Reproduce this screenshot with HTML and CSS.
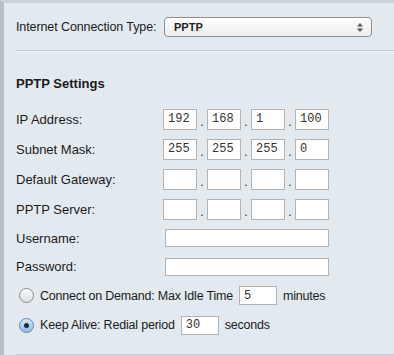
FILE: index.html
```html
<!DOCTYPE html>
<html lang="en">
<head>
    <meta charset="UTF-8">
    <title>PPTP Settings</title>
    <link rel="stylesheet" href="styles.css">
</head>
<body>
    <div class="frame">
        <div class="row top">
            <span class="label">Internet Connection Type:</span>
            <div class="select">
                <span>PPTP</span>
                <svg width="6" height="9" viewBox="0 0 6 9"><path d="M3 0 L6 3.5 H0 Z M3 9 L6 5.5 H0 Z" fill="#555"/></svg>
            </div>
        </div>
        <hr class="line">

        <h2>PPTP Settings</h2>

        <div class="row ip first">
            <span class="label">IP Address:</span>
            <div class="octets">
                <input class="oct" value="192"><span class="dot">.</span><input class="oct" value="168"><span class="dot">.</span><input class="oct" value="1"><span class="dot">.</span><input class="oct" value="100">
            </div>
        </div>
        <div class="row ip">
            <span class="label">Subnet Mask:</span>
            <div class="octets">
                <input class="oct" value="255"><span class="dot">.</span><input class="oct" value="255"><span class="dot">.</span><input class="oct" value="255"><span class="dot">.</span><input class="oct" value="0">
            </div>
        </div>
        <div class="row ip">
            <span class="label">Default Gateway:</span>
            <div class="octets">
                <input class="oct"><span class="dot">.</span><input class="oct"><span class="dot">.</span><input class="oct"><span class="dot">.</span><input class="oct">
            </div>
        </div>
        <div class="row ip">
            <span class="label">PPTP Server:</span>
            <div class="octets">
                <input class="oct"><span class="dot">.</span><input class="oct"><span class="dot">.</span><input class="oct"><span class="dot">.</span><input class="oct">
            </div>
        </div>
        <div class="row text">
            <span class="label">Username:</span>
            <input class="wide">
        </div>
        <div class="row text">
            <span class="label">Password:</span>
            <input class="wide" type="password">
        </div>

        <div class="row opt">
            <span class="radio"></span>
            <span>Connect on Demand: Max Idle Time</span>
            <input class="small" value="5">
            <span>minutes</span>
        </div>
        <div class="row opt">
            <span class="radio on"></span>
            <span>Keep Alive: Redial period</span>
            <input class="small" value="30">
            <span>seconds</span>
        </div>
        <hr class="line bottom">
    </div>
</body>
</html>
```

FILE: styles.css
```css
body {
    margin: 0;
    font-family: 'Liberation Sans', Arial, sans-serif;
    font-size: 13px;
    color: #1a1a1a;
    background: #e3eaef;
}
.frame {
    height: 352px;
    border-left: 4px solid #b4c1cb;
    border-top: 3px solid #c9d3da;
    padding-left: 12px;
    background: #e3eaef;
}
.row {
    display: flex;
    align-items: center;
}
.label {
    width: 147px;
    flex: none;
    white-space: nowrap;
}
.top {
    padding-top: 14px;
}
.top .label {
    width: 148px;
    font-size: 12.5px;
    letter-spacing: -0.1px;
}
.select {
    width: 189px;
    height: 18px;
    flex: none;
    border: 1px solid #8e8e8e;
    border-radius: 4px;
    background: linear-gradient(#ffffff, #ececec);
    display: flex;
    align-items: center;
    justify-content: space-between;
    padding: 0 8px 0 9px;
    box-sizing: content-box;
    font-size: 11px;
    font-weight: bold;
    color: #222;
}
.line {
    border: none;
    border-top: 1px solid #bfc8cf;
    border-bottom: 1px solid #f2f5f7;
    margin: 13px 0 0 0;
}
h2 {
    font-size: 13px;
    font-weight: bold;
    margin: 24px 0 0 0;
}
input {
    box-sizing: border-box;
    border: 1px solid #b3b3b3;
    background: #fff;
    font-family: 'Liberation Mono', 'Courier New', monospace;
    font-size: 12px;
    color: #333;
    padding: 0 4px;
    margin: 0;
    outline: none;
}
.ip {
    height: 30px;
}
.ip.first {
    margin-top: 13px;
}
.octets {
    display: flex;
    align-items: center;
}
.oct {
    width: 34px;
    height: 21px;
}
.dot {
    width: 10px;
    text-align: center;
    padding-top: 6px;
    font-size: 12px;
}
.text {
    height: 28.5px;
}
.wide {
    width: 164px;
    height: 18px;
    margin-left: 2px;
}
.opt {
    height: 29px;
    font-size: 12.5px;
    letter-spacing: -0.2px;
}
.opt + .opt {
    height: 30px;
}
.radio {
    width: 13px;
    height: 13px;
    flex: none;
    border: 1px solid #8a8a8a;
    border-radius: 50%;
    background: linear-gradient(#ffffff, #dcdcdc);
    margin: 0 6px 0 3px;
    position: relative;
}
.radio.on {
    background: linear-gradient(#d8e8f8, #8fbce8);
    border-color: #5e86b0;
}
.radio.on::after {
    content: "";
    position: absolute;
    left: 4px;
    top: 4px;
    width: 5px;
    height: 5px;
    border-radius: 50%;
    background: #1c2b3a;
}
.small {
    width: 38px;
    height: 19px;
    margin: 0 6px 0 6px;
    letter-spacing: 0;
}
.bottom {
    margin-top: 14px;
}
```
